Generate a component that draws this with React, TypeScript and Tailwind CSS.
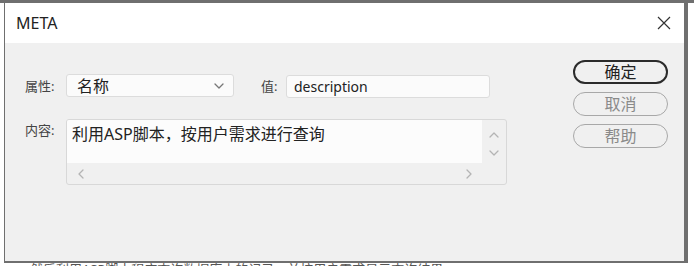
const font = { fontFamily: '"Noto Sans", "Noto Sans CJK SC", sans-serif' };

// small chevron drawn as a polyline, dir = direction it points to
function Chevron({ dir, color, size = 9 }: { dir: "up" | "down" | "left" | "right"; color: string; size?: number }) {
  const pts = {
    down: "1,3 5,7 9,3",
    up: "1,7 5,3 9,7",
    left: "7,1 3,5 7,9",
    right: "3,1 7,5 3,9",
  }[dir];
  return (
    <svg width={size} height={size} viewBox="0 0 10 10" fill="none">
      <polyline points={pts} stroke={color} strokeWidth={1.3} strokeLinecap="round" strokeLinejoin="round" />
    </svg>
  );
}

function DialogButton({ label, primary }: { label: string; primary?: boolean }) {
  return (
    <button
      className={
        "flex h-[24px] w-[95px] items-center justify-center rounded-full text-[16px] leading-none " +
        (primary
          ? "border-2 border-[#2b2b2b] text-[#222]"
          : "border border-[#a8a8a8] text-[#8a8a8a]")
      }
    >
      {label}
    </button>
  );
}

export default function App() {
  return (
    <div className="relative h-[266px] w-[694px] overflow-hidden bg-white" style={font}>
      <div className="h-[3px] w-full bg-[#6f6f6f]" />
      <div className="ml-[4px] flex h-[260px] w-[684px] flex-col border-b-2 border-l border-r-4 border-[#6f6f6f]">
        {/* title bar */}
        <div className="flex h-[40px] shrink-0 items-center justify-between bg-white pl-[11px] pr-[13px]">
          <span className="text-[16px] text-[#222]">META</span>
          <svg width="14" height="14" viewBox="0 0 14 14">
            <path d="M1 1 L13 13 M13 1 L1 13" stroke="#333" strokeWidth={1.2} />
          </svg>
        </div>

        {/* body */}
        <div className="flex flex-1 bg-[#f0f0f0]">
          <div className="pl-[20px] pt-[30px]">
            <div className="flex items-center">
              <span className="w-[41px] pt-[3px] text-[13px] text-[#444]">属性:</span>
              <div className="flex h-[23px] w-[168px] items-center justify-between rounded-[3px] border border-[#dcdcdc] bg-[#fbfbfb] pl-[10px] pr-[9px]">
                <span className="text-[16px] leading-none text-[#222]">名称</span>
                <Chevron dir="down" color="#777" size={10} />
              </div>
              <span className="ml-[27px] w-[25px] pt-[3px] text-[13px] text-[#444]">值:</span>
              <div className="mt-[2px] flex h-[23px] w-[204px] items-center rounded-[3px] border border-[#dcdcdc] bg-[#fbfbfb] pl-[7px]">
                <span className="text-[14px] leading-none text-[#222]">description</span>
              </div>
            </div>

            <div className="mt-[21px] flex items-start">
              <span className="w-[41px] pt-[2px] text-[13px] text-[#444]">内容:</span>
              <div className="flex h-[66px] w-[441px] flex-col overflow-hidden rounded-[3px] border border-[#d8d8d8] bg-[#f0f0f0]">
                <div className="flex h-[43px]">
                  <div className="flex-1 bg-[#fcfcfc] pl-[5px] pt-[2px] text-[16px] leading-[24px] text-[#222]">
                    利用ASP脚本，按用户需求进行查询
                  </div>
                  <div className="flex w-[24px] flex-col items-center pt-[10px]">
                    <Chevron dir="up" color="#b4b4b4" size={10} />
                    <div className="mt-[8px]">
                      <Chevron dir="down" color="#b4b4b4" size={10} />
                    </div>
                  </div>
                </div>
                <div className="flex flex-1 items-center justify-between pl-[9px] pr-[32px]">
                  <Chevron dir="left" color="#b4b4b4" size={10} />
                  <Chevron dir="right" color="#b4b4b4" size={10} />
                </div>
              </div>
            </div>
          </div>

          <div className="ml-auto flex flex-col gap-[8px] pr-[16px] pt-[17px]">
            <DialogButton label="确定" primary />
            <DialogButton label="取消" />
            <DialogButton label="帮助" />
          </div>
        </div>
      </div>
      <div className="ml-[30px] h-[3px] overflow-hidden">
        <div className="text-[13px] leading-[13px] text-[#555]">
          然后利用ASP脚本程序查询数据库中的记录，并按用户需求显示查询结果
        </div>
      </div>
    </div>
  );
}
